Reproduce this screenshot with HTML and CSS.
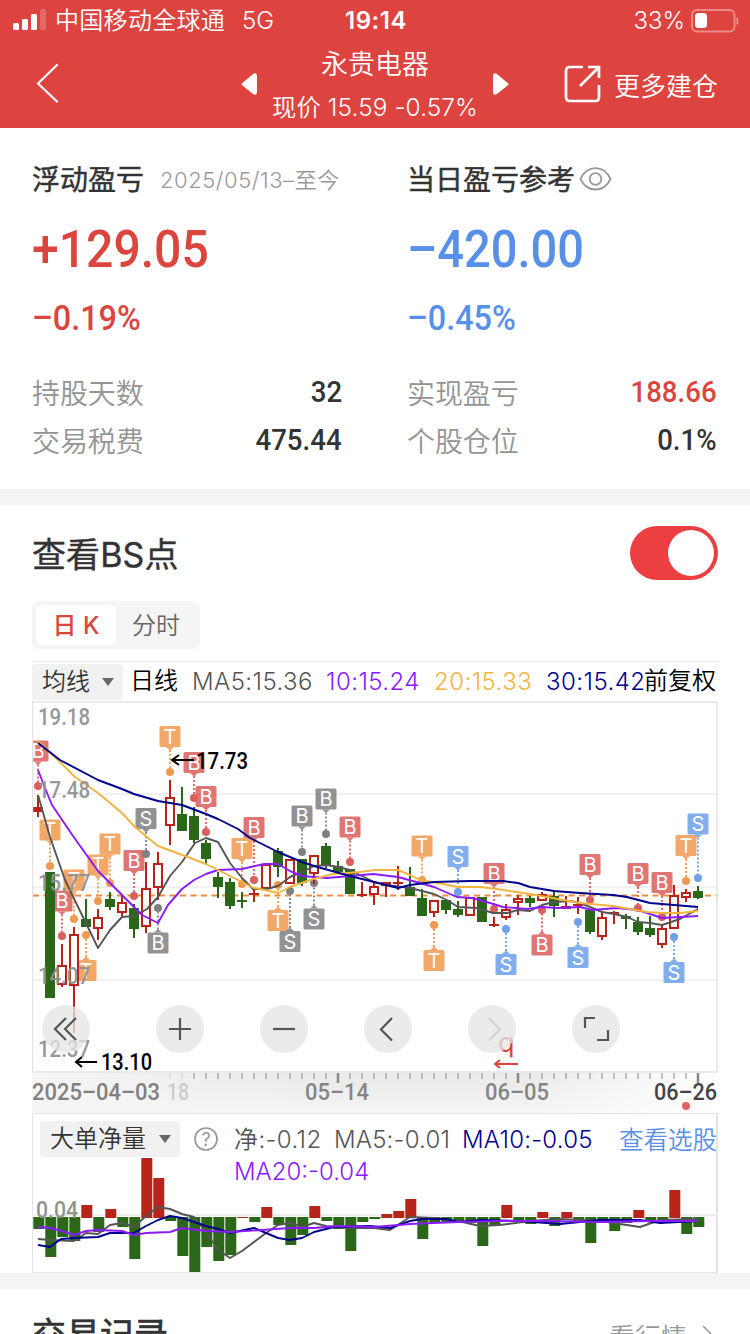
FILE: index.html
```html
<!DOCTYPE html>
<html lang="zh-CN">
<head>
<meta charset="utf-8">
<title>永贵电器</title>
<link rel="stylesheet" href="styles.css">
</head>
<body>
<header class="top">
  <div class="status">
    <div class="status-left">
      <svg class="signal" width="33" height="22" viewBox="0 0 33 22"><g fill="#fff"><rect x="0" y="14" width="6" height="7" rx="1.5"/><rect x="9" y="10" width="6" height="11" rx="1.5"/><rect x="18" y="5" width="6" height="16" rx="1.5"/><rect x="27" y="0" width="6" height="21" rx="1.5" opacity=".2"/></g></svg>
      <span class="carrier">中国移动全球通</span><span class="net">5G</span>
    </div>
    <div class="time">19:14</div>
    <div class="status-right">
      <span class="pct">33%</span>
      <svg width="49" height="24" viewBox="0 0 49 24"><rect x="2" y="1" width="42.500" height="21.500" rx="5" fill="none" stroke="#fff" stroke-opacity=".38" stroke-width="2"/><rect x="5" y="4" width="12" height="15" rx="3.500" fill="#fff"/><path d="M46.500 8q2 1 2 4t-2 4z" fill="#fff" opacity=".45"/></svg>
    </div>
  </div>
  <nav class="nav">
    <svg class="back" width="24" height="40" viewBox="0 0 24 40"><path d="M21 2 2 20.500 21 38.500" fill="none" stroke="#fff" stroke-width="2.200" stroke-linecap="round" stroke-linejoin="round"/></svg>
    <div class="stock">
      <svg width="17" height="24" viewBox="0 0 17 24"><path d="M2 10.500 12 2q4-2 4 2v16q0 4-4 2L2 14q-3-1.700 0-3.500" fill="#fff"/></svg>
      <div class="stock-text"><div class="stock-name">永贵电器</div><div class="stock-price">现价 15.59 -0.57%</div></div>
      <svg width="17" height="24" viewBox="0 0 17 24"><path d="M15 10.500 5 2Q1 0 1 4v16q0 4 4 2l10-8q3-1.700 0-3.500" fill="#fff"/></svg>
    </div>
    <div class="more">
      <svg width="38" height="38" viewBox="0 0 38 38"><path d="M19 2H6Q2 2 2 6v26q0 4 4 4h26q3 0 3-4V20M24 2h11v11M34 3 16 21" fill="none" stroke="#fff" stroke-width="2.700"/></svg>
      <span>更多建仓</span>
    </div>
  </nav>
</header>

<section class="summary">
  <div class="col">
    <div class="col-head"><b>浮动盈亏</b><span class="range">2025/05/13–至今</span></div>
    <div class="big red"><span>+129.05</span></div>
    <div class="rate red"><span>–0.19%</span></div>
    <div class="kv"><span>持股天数</span><b>32</b></div>
    <div class="kv"><span>交易税费</span><b>475.44</b></div>
  </div>
  <div class="col">
    <div class="col-head"><b>当日盈亏参考</b><svg class="eye" width="33" height="24" viewBox="0 0 33 24"><g fill="none" stroke="#999" stroke-width="1.800"><path d="M1.500 12C5 4.500 10.500 1.200 16.500 1.200S28 4.500 31.500 12C28 19.500 22.500 22.500 16.500 22.500S5 19.500 1.500 12z"/><circle cx="16.500" cy="12" r="5.800"/></g></svg></div>
    <div class="big blue"><span>–420.00</span></div>
    <div class="rate blue"><span>–0.45%</span></div>
    <div class="kv"><span>实现盈亏</span><b class="red">188.66</b></div>
    <div class="kv"><span>个股仓位</span><b>0.1%</b></div>
  </div>
</section>

<section class="chart-card">
  <div class="bs-row"><h2>查看BS点</h2><div class="switch"><i></i></div></div>
  <div class="tabs"><span class="tab on">日 K</span><span class="tab">分时</span></div>
  <div class="ma-row">
    <span class="select">均线<i></i></span>
    <span class="period">日线</span><span class="ma m5">MA5:15.36</span><span class="ma m10">10:15.24</span><span class="ma m20">20:15.33</span><span class="ma m30">30:15.42</span><span class="fq">前复权</span>
  </div>
  <div class="kchart">
    <svg id="kline" width="686" height="372" viewBox="32 701 686 372"></svg>
    <div class="tools">
      <button><svg viewBox="0 0 48 48"><path d="M24 13 13 24 24 35M34 13 23 24 34 35"/></svg></button>
      <button><svg viewBox="0 0 48 48"><path d="M13 24h22M24 13v22"/></svg></button>
      <button><svg viewBox="0 0 48 48"><path d="M13 24h22"/></svg></button>
      <button><svg viewBox="0 0 48 48"><path d="M28 13 17 24.500 28 35.500"/></svg></button>
      <button><svg viewBox="0 0 48 48"><path d="M21 13 32 24.500 21 35.500" class="off"/></svg></button>
      <button><svg viewBox="0 0 48 48"><path d="M13 23V13h10M25 35h11V25"/></svg></button>
    </div>
  </div>
  <svg id="axis" class="axis" width="686" height="40" viewBox="32 1073 686 40"></svg>
  <div class="flow">
    <div class="flow-head">
      <span class="select wide">大单净量<i></i></span>
      <svg class="help" width="24" height="24" viewBox="0 0 24 24"><circle cx="12" cy="12" r="11" fill="none" stroke="#999" stroke-width="1.700"/><text x="12" y="18.500" text-anchor="middle">?</text></svg>
      <div class="flow-vals"><span class="g1">净:-0.12</span><span class="g2">MA5:-0.01</span><span class="g3">MA10:-0.05</span><br><span class="g4">MA20:-0.04</span></div>
      <span class="pick">查看选股</span>
    </div>
    <svg id="flow" width="686" height="118" viewBox="32 1155 686 118"></svg>
  </div>
</section>

<section class="records"><h2>交易记录</h2><span>看行情<svg width="12" height="22" viewBox="0 0 12 22"><path d="M1 2 10 11 1 20" fill="none" stroke="#999" stroke-width="1.500"/></svg></span></section>
<script src="chart.js"></script>
</body>
</html>
```
FILE: styles.css
```css
* { box-sizing: border-box; }
body { margin: 0; width: 750px; height: 1334px; overflow: hidden; background: #fff; color: #333; font-family: Inter, "Noto Sans CJK SC", sans-serif; }
svg { display: block; flex: none; }
h2 { margin: 0; }

.top { height: 128px; background: #dd4440; color: #fff; font-weight: 350; }
.status { display: grid; grid-template-columns: 1fr auto 1fr; align-items: center; height: 42px; padding: 0 11px 0 13px; font-size: 24px; line-height: 42px; }
.status-left { display: flex; align-items: center; }
.signal { margin-top: -2px; }
.carrier { margin-left: 9px; letter-spacing: .3px; }
.net { margin-left: 17px; }
.time { font-weight: 600; letter-spacing: .5px; }
.status-right { display: flex; align-items: center; justify-content: flex-end; gap: 5px; }
.pct { font-weight: 350; }
.nav { display: grid; grid-template-columns: 241px 268px 1fr; align-items: center; height: 86px; }
.back { margin-left: 36px; margin-top: -4px; }
.stock { display: flex; align-items: center; justify-content: space-between; }
.stock > svg { margin-top: -2px; }
.stock-text { text-align: center; white-space: nowrap; }
.stock-name { font-size: 27px; line-height: 42px; margin-top: 1px; }
.stock-price { font-size: 24.3px; line-height: 42px; letter-spacing: .15px; }
.more { display: flex; align-items: center; gap: 12px; margin-left: 55px; margin-top: -2px; font-size: 26px; }

.red { color: #da453d !important; }
.blue { color: #5890e8; }
.summary { display: grid; grid-template-columns: 1fr 1fr; height: 361px; padding-top: 30px; }
.col { padding: 0 33px 0 32px; }
.col + .col { padding-left: 32px; }
.col-head { display: flex; align-items: center; height: 42px; }
.col-head b { font-size: 28px; font-weight: 400; line-height: 40px; margin-top: 2px; -webkit-text-stroke: .45px #333; }
.range { margin-left: 16px; margin-top: -3px; font-size: 22px; color: #999; font-weight: 350; letter-spacing: .55px; white-space: nowrap; }
.eye { margin-left: 4px; }
.big, .rate { font-family: Roboto, sans-serif; font-weight: 500; }
.big span, .rate span { display: inline-block; transform-origin: 0 50%; transform: scaleX(.925); white-space: nowrap; }
.big.blue span { transform: scaleX(.905); }
.big { font-size: 52px; line-height: 60px; margin-top: 20px; height: 60px; }
.rate { font-size: 35px; line-height: 42px; margin-top: 18px; height: 42px; margin-bottom: 28px; }
.kv { display: flex; justify-content: space-between; align-items: center; height: 48px; }
.kv span { font-size: 28px; font-weight: 350; color: #949494; letter-spacing: -.1px; margin-top: -1px; }
.kv b { font: 500 30px Roboto, sans-serif; color: #333; transform: scaleX(.92); transform-origin: 100% 50%; margin-top: -1px; }

.chart-card { border-top: 16px solid #f4f4f4; border-bottom: 16px solid #f4f4f4; padding: 20px 32px 0; height: 800px; }
.bs-row { display: flex; justify-content: space-between; align-items: center; height: 56px; }
.bs-row h2 { font-size: 34px; font-weight: 400; margin-top: -2px; letter-spacing: .1px; -webkit-text-stroke: .4px #333; }
.switch { width: 88px; height: 54px; border-radius: 27px; background: #eb3f42; padding: 4px; display: flex; justify-content: flex-end; }
.switch i { width: 46px; height: 46px; border-radius: 50%; background: #fff; }
.tabs { display: flex; width: 168px; height: 48px; margin-top: 20px; padding: 4px; border-radius: 8px; background: #f5f5f5; }
.tab { width: 80px; text-align: center; font-size: 24px; line-height: 42px; color: #666; font-weight: 350; }
.tab.on { background: #fff; border-radius: 6px; color: #da453d; font-weight: 500; height: 40px; }
.ma-row { display: flex; align-items: center; border-top: 1px solid #e9e9e9; height: 40px; margin-top: 12px; font-size: 24px; line-height: 36px; white-space: nowrap; color: #000; font-weight: 350; }
.select { display: flex; align-items: center; justify-content: space-between; width: 91px; height: 36px; padding: 0 9px 0 10px; border-radius: 3px; background: #f1f1f1; color: #333; font-size: 24px; font-weight: 350; flex: none; }
.select i { border: 6px solid transparent; border-top: 8px solid #666; border-bottom: 0; }
.period { margin-left: 7px; width: 62px; margin-top: -1px; }
.fq { margin-top: -2px; }
.ma { letter-spacing: .45px; flex: none; }
.m5 { width: 134px; color: #555; }
.m10 { width: 108px; color: #8b1aff; }
.m20 { width: 112px; color: #f3b43f; }
.m30 { width: 98px; color: #00008f; }
.kchart { position: relative; height: 372px; }
.tools { position: absolute; left: 10px; top: 304px; display: flex; gap: 56px; }
.tools button { width: 48px; height: 48px; padding: 0; border: 0; border-radius: 50%; background: rgba(230,230,230,.78); }
.tools button:first-child { margin-right: 10px; }
.tools path { fill: none; stroke: #555; stroke-width: 2.2; }
.tools path.off { stroke: #d2d2d2; }
.axis { background: linear-gradient(90deg, rgba(255,255,255,0) 72%, #fff), linear-gradient(90deg, #f5f5f5, rgba(245,245,245,0) 40%), linear-gradient(#e9e9e9, #f5f5f5); }
.din { font: 400 24px Roboto, sans-serif; }
.tag { font: 400 20px Inter, sans-serif; fill: #fff; text-anchor: middle; }
.flow { border: 1px solid #e4e4e4; border-width: 1px 2px 1px 1px; height: 160px; }
.flow svg { margin-left: -1px; }
.flow-head { display: flex; height: 41px; align-items: flex-start; padding-left: 7px; color: #555; font-size: 24px; line-height: 32px; }
.flow-head .select { margin-top: 7px; }
.select.wide { width: 140px; }
.help { margin: 13px 0 0 14px !important; }
.help text { font: 400 18px Inter, sans-serif; fill: #999; }
.flow-vals { width: 386px; margin-left: 16px; padding-top: 10px; font-size: 24px; white-space: nowrap; font-weight: 350; flex: none; }
.g1 { display: inline-block; width: 100px; letter-spacing: .4px; }
.g2 { display: inline-block; width: 128px; letter-spacing: .2px; }
.g3 { color: #00008f; letter-spacing: .25px; }
.g4 { color: #8b1aff; }
.pick { color: #5890e8; font-size: 24.5px; font-weight: 350; padding-top: 10px; white-space: nowrap; margin-left: -1px; }

.records { display: flex; justify-content: space-between; padding: 26px 36px 0 32px; height: 45px; overflow: hidden; }
.records h2 { font-size: 34px; font-weight: 400; line-height: 40px; color: #333; -webkit-text-stroke: .7px #333; }
.records span { display: flex; align-items: center; gap: 15px; height: 40px; font-size: 26px; font-weight: 350; color: #999; }
```
FILE: chart.js
```js
const NS = 'http://www.w3.org/2000/svg';
const RED = '#b7251a', GREEN = '#2b6718';
const TAG = { r: '#db5f5c', o: '#f09a50', g: '#808080', b: '#6ea1ea' };
const xAt = i => 38 + 12 * i;

function add(svg, name, attrs, text) {
  const el = document.createElementNS(NS, name);
  for (const k in attrs) el.setAttribute(k, attrs[k]);
  if (text) el.textContent = text;
  svg.appendChild(el);
  return el;
}
function line(svg, pts, color) {
  add(svg, 'polyline', { points: pts, fill: 'none', stroke: color, 'stroke-width': 1.9, 'stroke-linejoin': 'round' });
}
function din(svg, x, y, w, text, fill, extra) {
  add(svg, 'text', Object.assign({ class: 'din', x, y, textLength: w, lengthAdjust: 'spacingAndGlyphs', fill }, extra), text);
}

/* high, body top, body bottom, low, kind: h hollow rise, r thin rise, g fall */
const candles = `795 807 812 817 r;872 872 998 998 g;944 965 985 987 h;927 934 986 1033 h;899 919 927 927 g;909 917 929 940 h;892 899 907 910 g;895 902 913 917 h;904 908 929 938 g;862 888 927 933 h;852 863 888 900 h;780 797 826 845 h;787 814 831 831 g;807 816 840 843 g;840 843 859 864 g;872 877 887 898 g;878 882 906 909 g;892 900 902 908 g;889 893 895 902 r;864 864 889 889 h;848 851 867 877 g;859 859 884 884 h;859 859 883 886 g;855 855 874 884 h;843 846 866 868 g;861 866 872 872 g;869 869 894 894 g;882 894 896 897 r;882 886 895 905 h;882 882 886 897 h;866 882 884 890 r;867 887 896 896 g;889 898 916 916 g;900 900 913 917 h;900 900 910 914 g;901 909 915 917 g;897 897 916 916 h;897 897 922 922 g;917 924 926 927 r;904 909 918 920 h;895 898 903 915 h;896 898 903 907 g;892 894 901 901 h;891 896 906 917 g;896 906 909 909 r;897 904 906 914 r;910 910 932 934 g;911 917 937 940 h;911 912 914 924 r;914 916 919 929 g;917 922 932 935 g;916 928 935 937 g;925 928 945 948 h;885 895 929 929 h;889 892 898 902 h;886 891 898 899 g`
  .split(';').map(s => s.split(' '));

/* index, letter, colour, tag centre y, dot y */
const tags = `0 B r 751 786;1 T o 830 866;2 B r 901 936;3 T o 880 919;4 T o 970.5 935;5 T o 865 901;6 T o 844 883;8 B r 860.5 896;9 S g 818.5 854;10 B g 943 908;11 T o 736.5 772;13 B r 762.5 798;14 B r 796.5 832;17 T o 848.5 884;18 B r 827.5 880;20 T o 920.5 885;21 S g 941.5 891;22 B g 816 852;23 S g 919 883;24 B g 799 834;26 B r 827 862;32 T o 846 880;33 T o 960.5 925;35 S b 856.5 892;38 B r 873.5 909;39 S b 964.5 929;42 B r 945 910;45 S b 957.5 922;46 B r 864.5 900;50 B r 873.5 908;52 B r 882.5 917;53 S b 972.5 937;54 T o 845.5 881;55 S b 824 878`
  .split(';').map(s => s.split(' '));

const k = document.getElementById('kline');
for (const y of [794, 887, 980]) add(k, 'rect', { x: 32, y: y - 1, width: 686, height: 2, fill: '#f1f1f3' });
add(k, 'path', { d: 'M33 895.500H718', stroke: '#ef8c3c', 'stroke-width': 2, 'stroke-dasharray': '6 4.500' });
for (const [i, letter, c, ty, dy] of tags) {
  const x = xAt(+i), t = +ty, d = +dy, s = t < d ? 1 : -1, e = t + s * 10.5;
  add(k, 'path', { d: `M${x} ${e + s * 3}V${d}`, stroke: TAG[c], 'stroke-width': 1.8, 'stroke-dasharray': '2 2' });
  add(k, 'rect', { x: x - 10.5, y: t - 10.5, width: 21, height: 21, rx: 1.5, fill: TAG[c], opacity: .86 });
  add(k, 'path', { d: `M${x - 4} ${e}h8L${x} ${e + s * 3.5}z`, fill: TAG[c], opacity: .86 });
  add(k, 'circle', { cx: x, cy: d, r: 4, fill: TAG[c] });
  add(k, 'text', { class: 'tag', x, y: t + 7.2 }, letter);
}
candles.forEach(([hi, a, b, lo, kind], i) => {
  const x = xAt(i), color = kind === 'g' ? GREEN : RED;
  add(k, 'path', { d: `M${x} ${hi}V${a}M${x} ${b}V${lo}`, stroke: color, 'stroke-width': 2 });
  if (kind === 'h') add(k, 'rect', { x: x - 4, y: +a + 1, width: 8, height: Math.max(1, b - a - 2), fill: '#fff', stroke: color, 'stroke-width': 2 });
  else add(k, 'rect', { x: x - 5, y: a, width: 10, height: b - a, fill: color });
});
line(k, '38,795 50,837 65,880 98,948 110,930 122,917 134,916 147,909 158,897 170,876 182,862 195,843 206,838 218,842 230,863 242,878 253,889 267,889 278,886 290,877 302,872 314,866 327,865 338,867 350,870 362,876 374,882 387,885 410,888 434,894 447,900 458,907 477,908 493,913 507,913 518,910 530,911 542,905 554,902 570,901 580,903 590,907 602,912 614,914 627,917 638,922 650,923 662,925 680,919 698,909', '#555');
line(k, '38,770 45,788 52,805 73,836 98,871 125,898 142,915 158,923 168,905 182,889 194,880 206,874 218,870 242,869 264,864 278,864 290,871 302,876 327,878 373,874 398,877 420,883 434,887 457,897 472,898 490,903 503,907 527,909 542,907 557,908 580,907 592,910 617,908 638,910 662,918 680,917 698,916', '#8b1aff');
line(k, '38,741 60,762 75,777 98,793 122,813 135,827 147,837 158,846 193,859 206,864 218,870 242,882 254,888 265,890 278,893 290,887 313,879 333,874 360,872 375,870 398,870 410,875 420,880 443,884 458,887 480,887 497,889 530,894 547,897 580,903 613,906 647,912 662,913 680,913 698,911', '#f3b43f');
line(k, '38,743 60,760 98,780 122,789 134,794 158,801 170,803 182,805 206,814 218,819 238,829 250,838 278,852 302,862 314,866 350,876 374,882 398,888 410,885 434,882 470,881 503,881 518,883 530,887 554,891 580,893 613,895 627,897 650,903 674,905 698,907', '#00008f');
[['19.18', 725], ['17.48', 798], ['15.77', 891], ['14.07', 984], ['12.37', 1057]].forEach(([t, y]) => din(k, 38, y, 52, t, '#929292', { opacity: .95, style: 'font-weight:500' }));
add(k, 'path', { d: 'M194 760H172M179 755l-7 5 7 5M97 1062H76M82 1057l-6 5 6 5', fill: 'none', stroke: '#000', 'stroke-width': 2 });
din(k, 196, 769, 52, '17.73', '#000', { style: 'font-weight:500' });
din(k, 101, 1070, 51, '13.10', '#000', { style: 'font-weight:500' });
add(k, 'text', { x: 498, y: 1052, fill: '#da453d', 'font-size': 27, 'font-family': 'Inter', 'font-weight': 400 }, 'q');
add(k, 'path', { d: 'M518 1064H495M500 1060l-5 4 5 4', fill: 'none', stroke: '#da453d', 'stroke-width': 2 });
add(k, 'rect', { x: 32.5, y: 702, width: 684.5, height: 370, fill: 'none', stroke: '#e4e4e4', 'stroke-width': 1.5 });

const a = document.getElementById('axis');
for (let x = 170; x <= 698; x += 12) {
  const major = (x - 338) % 180 === 0;
  add(a, 'path', { d: `M${x} 1073v${major ? 10 : 6}`, stroke: '#888', 'stroke-width': major ? 2.5 : 1, opacity: x < 190 ? .35 : 1 });
}
din(a, 32, 1100, 128, '2025–04–03', '#808080', { style: 'font-weight:500' });
din(a, 167, 1100, 22, '18', '#ccc', { style: 'font-weight:500' });
din(a, 305, 1100, 64, '05–14', '#858585', { style: 'font-weight:500' });
din(a, 485, 1100, 64, '06–05', '#858585', { style: 'font-weight:500' });
din(a, 654, 1100, 63, '06–26', '#444', { style: 'font-weight:500' });
add(a, 'circle', { cx: 686, cy: 1106, r: 4, fill: '#e26460' });

/* far edge of each bar; values above the base line are inflows */
const bars = [1229,1257,1237,1241,1205,1232,1209,1227,1259,1158,1178,1221,1256,1272,1247,1261,1255,1217,1222,1207,1225,1245,1235,1206,1221,1229,1251,1222,1219,1214,1211,1199,1239,1223,1222,1221,1223,1246,1225,1205,1220,1224,1212,1226,1212,1222,1243,1221,1231,1223,1210,1221,1220,1190,1234,1227];
const f = document.getElementById('flow');
add(f, 'rect', { x: 32, y: 1214, width: 686, height: 2, fill: '#ededed' });
bars.forEach((y, i) => {
  const up = y < 1218;
  add(f, 'rect', { x: xAt(i) - 4.7, y: up ? y : 1217, width: 11, height: up ? 1218 - y : y - 1217, fill: up ? RED : GREEN });
});
line(f, '38,1239 50,1240 74,1241 86,1233 98,1234 110,1225 122,1223 134,1227 146,1216 158,1207 170,1209 182,1214 194,1217 206,1232 218,1250 230,1258 242,1251 266,1233 278,1225 290,1223 302,1227 314,1223 326,1226 350,1228 374,1228 390,1230 410,1217 434,1218 458,1221 480,1226 500,1225 530,1221 560,1219 600,1221 640,1227 660,1220 698,1219', '#555');
line(f, '38,1245 50,1247 61,1239 74,1238 98,1237 110,1233 134,1233 146,1226 158,1220 170,1216 182,1218 206,1226 218,1229 230,1233 254,1228 278,1238 290,1240 302,1238 314,1232 334,1227 370,1226 390,1228 410,1221 422,1219 446,1219 458,1222 480,1220 520,1221 560,1224 600,1220 640,1220 660,1223 698,1221', '#00008f');
line(f, '38,1227 50,1228 62,1231 74,1235 86,1231 98,1230 122,1231 134,1235 146,1233 170,1232 182,1228 206,1231 230,1232 262,1230 290,1228 314,1228 338,1226 374,1227 410,1224 458,1222 500,1221 540,1221 600,1222 650,1221 698,1221', '#8b1aff');
din(f, 36, 1218, 42, '0.04', '#929292', { style: 'font-weight:500' });
```
